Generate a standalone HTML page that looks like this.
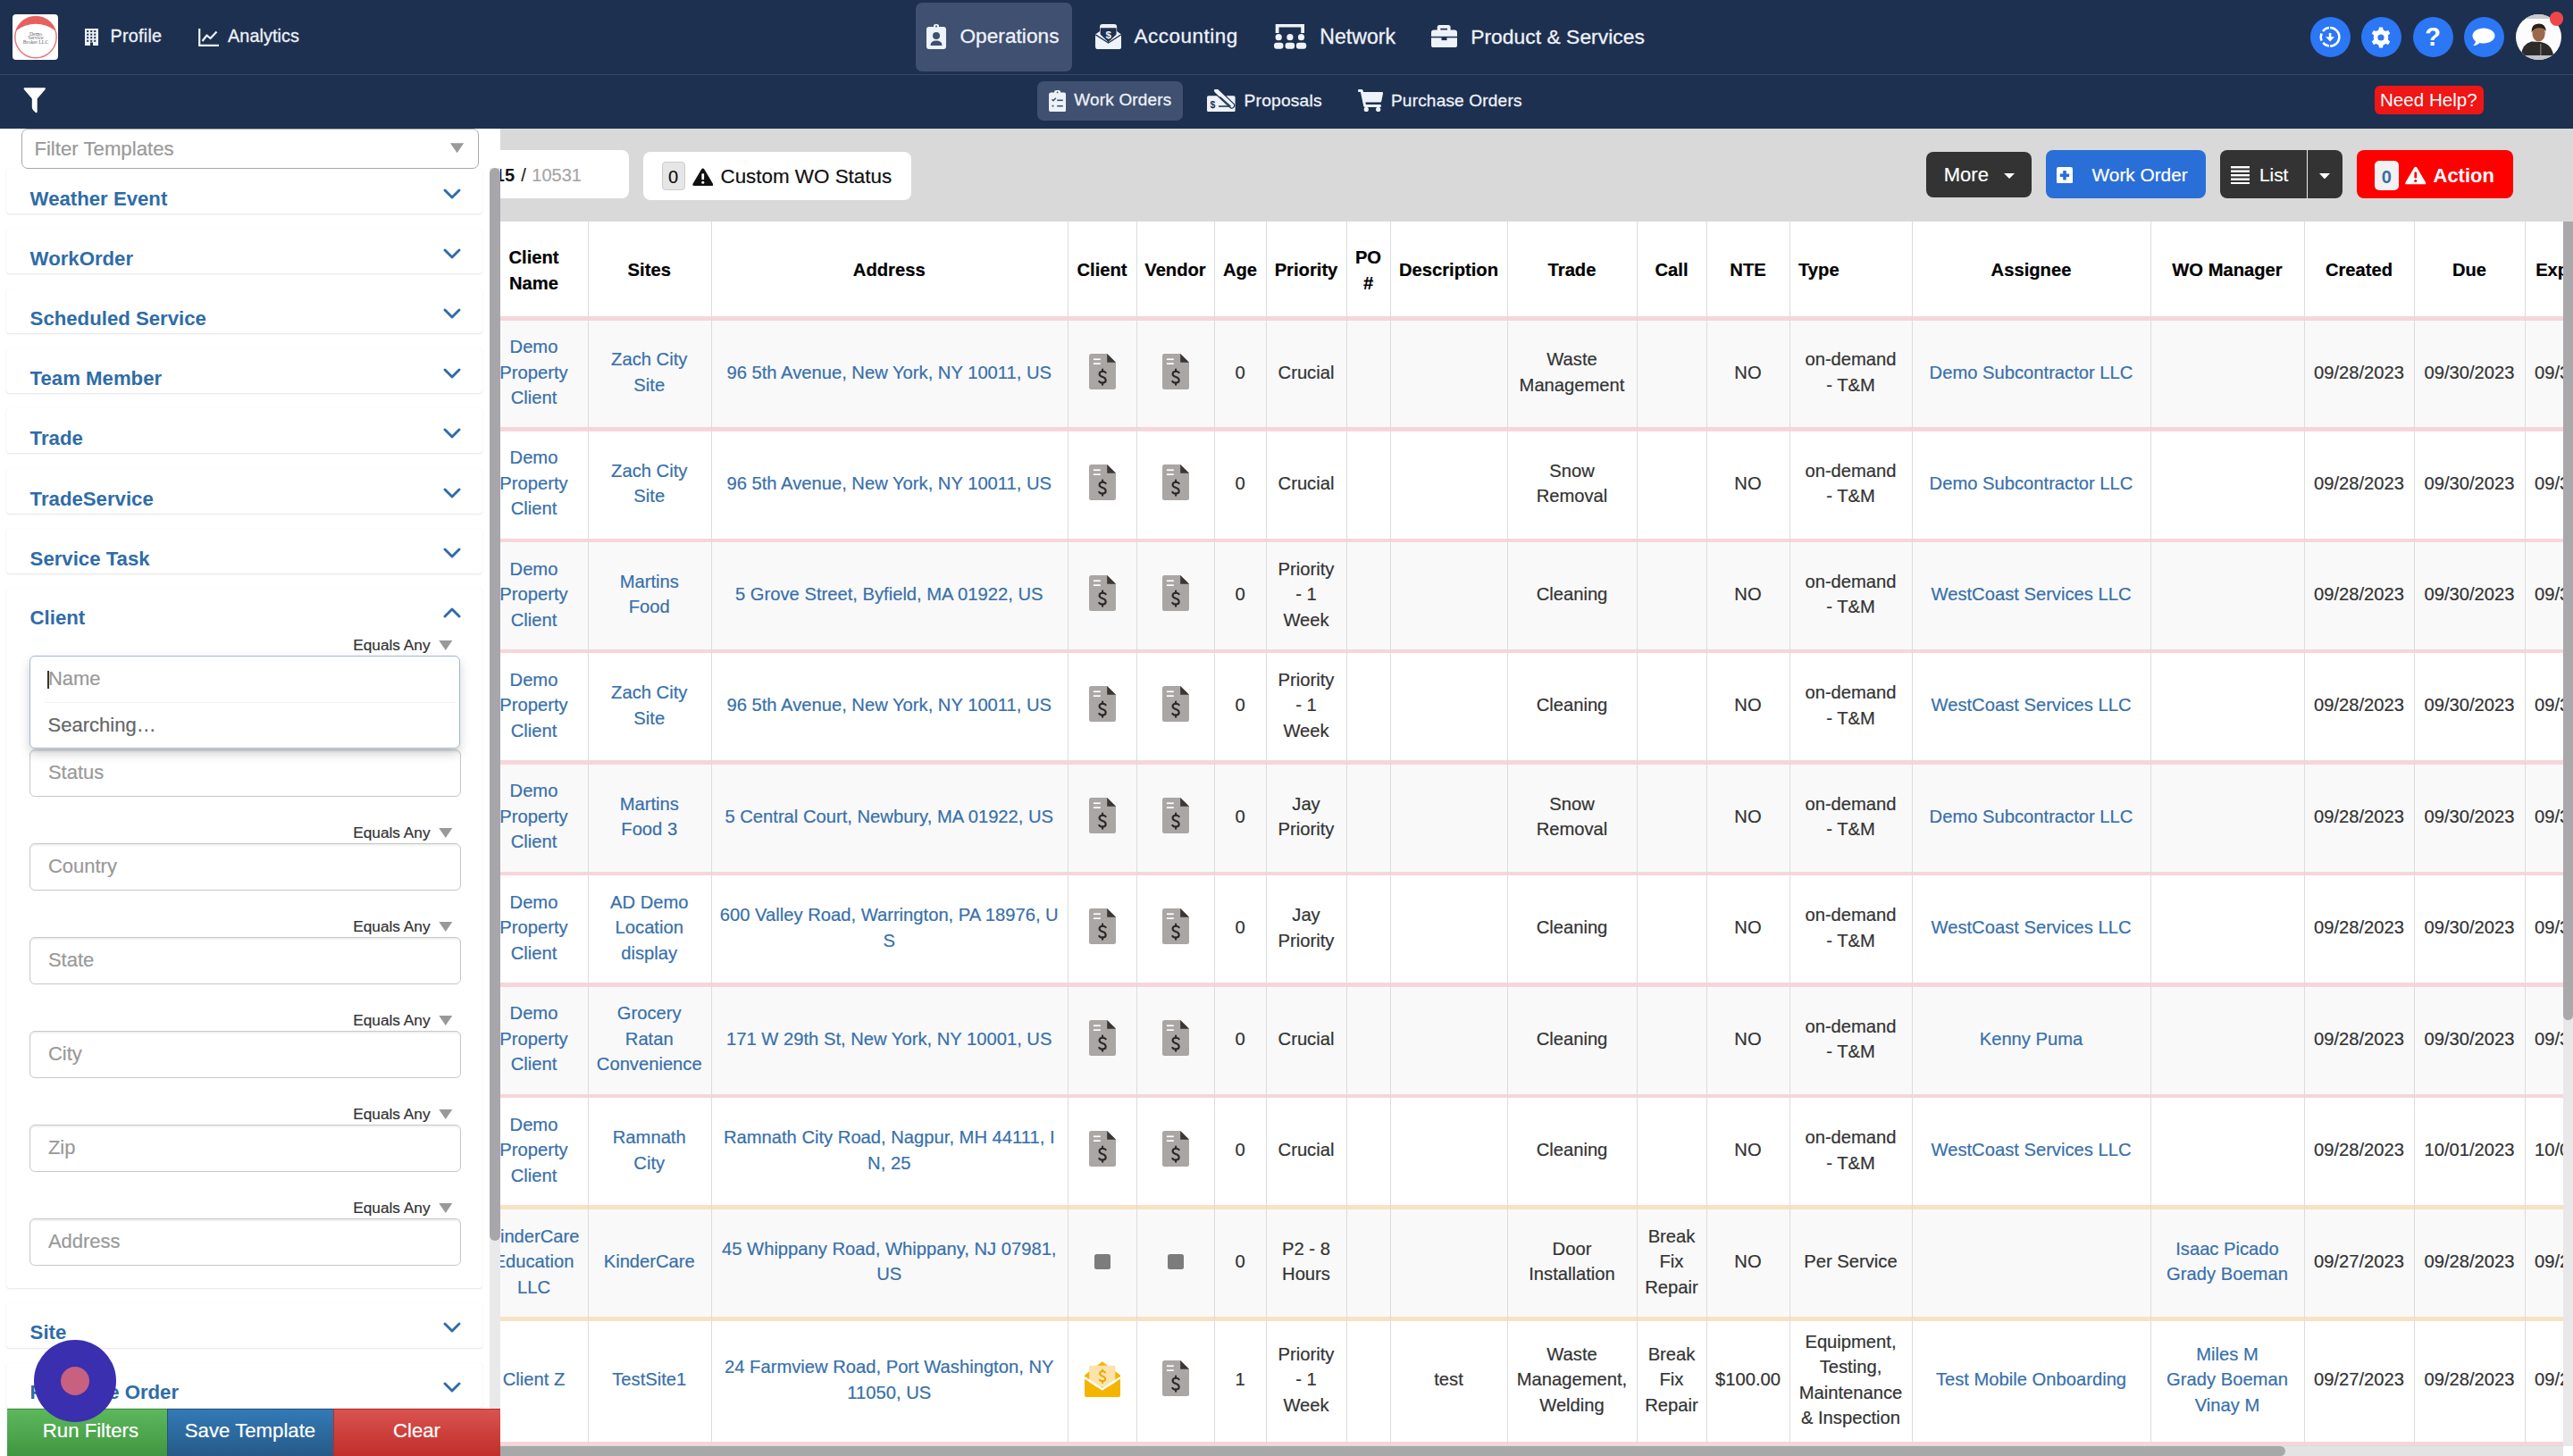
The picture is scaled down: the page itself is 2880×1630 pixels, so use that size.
<!DOCTYPE html><html><head><meta charset="utf-8"><style>
html,body{margin:0;padding:0;}
body{width:2880px;height:1630px;overflow:hidden;position:relative;background:#d9d9d9;font-family:"Liberation Sans", sans-serif;}
.t{position:absolute;white-space:nowrap;line-height:1;}
.b{position:absolute;}
.nav{z-index:5;}
.ns{-webkit-text-stroke:0.35px #eef2f9;}
.cell{position:absolute;display:flex;align-items:center;justify-content:center;text-align:center;font-size:20.2px;line-height:28.6px;color:#333;-webkit-text-stroke:0.2px currentColor;}
.lk{color:#3870aa;}
</style></head><body>
<div class="b" style="left:0.00px;top:0.00px;width:2880.00px;height:83.00px;background:#1e3050;z-index:5"></div>
<div class="b" style="left:0.00px;top:83.00px;width:2880.00px;height:1.00px;background:#364868;z-index:5"></div>
<div class="b" style="left:0.00px;top:84.00px;width:2880.00px;height:60.00px;background:#1e3050;z-index:5"></div>
<div class="b" style="left:14.00px;top:16.00px;width:51.00px;height:51.00px;background:#fff;border-radius:4px;z-index:6"></div>
<svg class="b" style="left:14.00px;top:16.00px;z-index:6;" width="51.00" height="51.00" viewBox="0 0 51 51"><circle cx="26" cy="25.6" r="23.2" fill="none" stroke="#e47676" stroke-width="1.4"/><path d="M3.95 18.4A23.2 23.2 0 0 1 48.05 18.4A35.8 35.8 0 0 0 3.95 18.4Z" fill="#e85f5f"/><text x="26" y="24" font-family="Liberation Serif" font-size="5.8" text-anchor="middle" fill="#666">Demo</text><text x="26" y="28.2" font-family="Liberation Serif" font-size="5.8" text-anchor="middle" fill="#666">Service</text><text x="26" y="32.6" font-family="Liberation Serif" font-size="5.8" text-anchor="middle" fill="#666">Broker LLC</text></svg>
<svg class="b" style="left:95.00px;top:32.00px;z-index:6;" width="15.00" height="19.00" viewBox="0 0 15 19"><path fill="#eef2f9" d="M0 0H15V19H9V15.5H6V19H0Z"/><rect x="2.2" y="2.0" width="2" height="2" fill="#1e3050"/><rect x="2.2" y="5.6" width="2" height="2" fill="#1e3050"/><rect x="2.2" y="9.2" width="2" height="2" fill="#1e3050"/><rect x="2.2" y="12.8" width="2" height="2" fill="#1e3050"/><rect x="6.2" y="2.0" width="2" height="2" fill="#1e3050"/><rect x="6.2" y="5.6" width="2" height="2" fill="#1e3050"/><rect x="6.2" y="9.2" width="2" height="2" fill="#1e3050"/><rect x="6.2" y="12.8" width="2" height="2" fill="#1e3050"/><rect x="10.2" y="2.0" width="2" height="2" fill="#1e3050"/><rect x="10.2" y="5.6" width="2" height="2" fill="#1e3050"/><rect x="10.2" y="9.2" width="2" height="2" fill="#1e3050"/><rect x="10.2" y="12.8" width="2" height="2" fill="#1e3050"/></svg>
<div class="t" style="left:123.50px;top:31.04px;font-size:19.8px;color:#eef2f9;font-weight:400;z-index:6;-webkit-text-stroke:0.3px #eef2f9;letter-spacing:0.25px">Profile</div>
<svg class="b" style="left:222.00px;top:31.50px;z-index:6;" width="23.00" height="20.00" viewBox="0 0 23 20"><path d="M1.2 0V18.8H23" fill="none" stroke="#eef2f9" stroke-width="2.2"/><path d="M4.5 14L9.5 7.5L13.5 11L20.5 3.5" fill="none" stroke="#eef2f9" stroke-width="2.2" stroke-linejoin="round"/></svg>
<div class="t" style="left:255.00px;top:31.44px;font-size:19.8px;color:#eef2f9;font-weight:400;z-index:6;-webkit-text-stroke:0.3px #eef2f9;letter-spacing:0.1px">Analytics</div>
<div class="b" style="left:1025.00px;top:3.00px;width:175.00px;height:77.00px;background:#3f5070;border-radius:7px;z-index:6"></div>
<svg class="b" style="left:1037.00px;top:27.00px;z-index:6;" width="22.00" height="28.00" viewBox="0 0 22 28"><rect x="0" y="3" width="22" height="25" rx="3" fill="#eef2f9"/><rect x="8" y="0" width="6" height="5" rx="2" fill="#eef2f9"/><circle cx="11" cy="2.5" r="1" fill="#3f5070"/><circle cx="11" cy="13" r="4" fill="#3f5070"/><path d="M4.5 24Q4.5 18.5 11 18.5Q17.5 18.5 17.5 24Z" fill="#3f5070"/></svg>
<div class="t" style="left:1074.50px;top:29.87px;font-size:22.6px;color:#eef2f9;font-weight:400;z-index:6;-webkit-text-stroke:0.3px #eef2f9;letter-spacing:0.05px">Operations</div>
<svg class="b" style="left:1225.60px;top:27.00px;z-index:6;" width="29.20" height="28.20" viewBox="0 0 29 28"><path d="M0 11.5L5 8V3Q5 0 8 0H21Q24 0 24 3V8L29 11.5V25Q29 28 26 28H3Q0 28 0 25Z" fill="#eef2f9"/><path d="M5.6 4.2H23.4V11.5L14.5 20.2L5.6 11.5Z" fill="#1e3050"/><path d="M0.3 11.8L14.5 20.8L28.7 11.8" fill="none" stroke="#1e3050" stroke-width="1.3"/><text x="14.5" y="16.3" font-family="Liberation Sans" font-weight="700" font-size="11.5" text-anchor="middle" fill="#eef2f9">$</text></svg>
<div class="t" style="left:1269.50px;top:29.94px;font-size:22.4px;color:#eef2f9;font-weight:400;z-index:6;-webkit-text-stroke:0.3px #eef2f9;letter-spacing:0.55px">Accounting</div>
<svg class="b" style="left:1426.00px;top:27.00px;z-index:6;" width="36.50" height="28.00" viewBox="0 0 36.5 28"><path d="M1.7 0H34V10H30.2V3.4H5.5V10H1.7Z" fill="#eef2f9"/><circle cx="5.2" cy="14.7" r="3.6" fill="#eef2f9"/><circle cx="17.9" cy="14.7" r="3.6" fill="#eef2f9"/><circle cx="30.5" cy="14.7" r="3.6" fill="#eef2f9"/><rect x="0" y="20.8" width="10.4" height="7" rx="3" fill="#eef2f9"/><rect x="12.6" y="20.8" width="10.5" height="7" rx="3" fill="#eef2f9"/><rect x="24.9" y="20.8" width="11.3" height="7" rx="3" fill="#eef2f9"/></svg>
<div class="t" style="left:1477.30px;top:29.93px;font-size:23.0px;color:#eef2f9;font-weight:400;z-index:6;-webkit-text-stroke:0.3px #eef2f9;letter-spacing:0.05px">Network</div>
<svg class="b" style="left:1602.00px;top:27.50px;z-index:6;" width="29.00" height="25.50" viewBox="0 0 29 25.5"><path d="M6.7 6V2.5Q6.7 0 9.2 0H19.1Q21.6 0 21.6 2.5V6H18V3.7H10.3V6Z" fill="#eef2f9"/><rect x="0" y="5.5" width="29" height="20" rx="3" fill="#eef2f9"/><rect x="0" y="12.8" width="29" height="1.5" fill="#1e3050"/><rect x="11.5" y="13.5" width="6" height="3.6" fill="#1e3050"/></svg>
<div class="t" style="left:1646.20px;top:29.70px;font-size:22.8px;color:#eef2f9;font-weight:400;z-index:6;-webkit-text-stroke:0.3px #eef2f9;letter-spacing:0.05px">Product &amp; Services</div>
<div class="b" style="left:2585.50px;top:18.90px;width:45.00px;height:45.00px;background:#2b77f5;border-radius:50%;z-index:6"></div>
<div class="b" style="left:2642.50px;top:18.90px;width:45.00px;height:45.00px;background:#2b77f5;border-radius:50%;z-index:6"></div>
<div class="b" style="left:2700.50px;top:18.90px;width:45.00px;height:45.00px;background:#2b77f5;border-radius:50%;z-index:6"></div>
<div class="b" style="left:2757.50px;top:18.90px;width:45.00px;height:45.00px;background:#2b77f5;border-radius:50%;z-index:6"></div>
<svg class="b" style="left:2585.00px;top:18.00px;z-index:6;" width="47.00" height="47.00" viewBox="0 0 47 47"><path d="M23.10 13.00A10.3 10.3 0 0 1 23.10 33.60M22.02 13.06A10.3 10.3 0 0 0 14.98 16.96M13.55 19.44A10.3 10.3 0 0 0 13.69 27.49M15.21 29.92A10.3 10.3 0 0 0 22.02 33.54" fill="none" stroke="#fff" stroke-width="2.5"/><path d="M23.1 19V25" fill="none" stroke="#fff" stroke-width="2.6"/><path d="M18.2 23.2H28L23.1 28.4Z" fill="#fff"/></svg>
<svg class="b" style="left:2653.00px;top:29.50px;z-index:6;" width="24.00" height="24.00" viewBox="0 0 24 24"><path fill="#fff" d="M10 0.5H14L14.6 3.5A9 9 0 0 1 17.3 5L20.2 4L22.2 7.4L19.9 9.4A9 9 0 0 1 19.9 14.6L22.2 16.6L20.2 20L17.3 19A9 9 0 0 1 14.6 20.5L14 23.5H10L9.4 20.5A9 9 0 0 1 6.7 19L3.8 20L1.8 16.6L4.1 14.6A9 9 0 0 1 4.1 9.4L1.8 7.4L3.8 4L6.7 5A9 9 0 0 1 9.4 3.5Z"/><circle cx="12" cy="12" r="3.6" fill="#2b77f5"/></svg>
<div class="t" style="left:2223.00px;width:1000px;text-align:center;top:26.95px;font-size:29px;color:#fff;font-weight:700;z-index:6">?</div>
<svg class="b" style="left:2767.00px;top:31.00px;z-index:6;" width="26.00" height="21.00" viewBox="0 0 26 21"><path fill="#fff" d="M13 0.5C20 0.5 25.5 4.3 25.5 9C25.5 13.7 20 17.5 13 17.5C11.5 17.5 10 17.3 8.6 16.9C6.8 18.6 4 20 1.2 20.2C2.8 18.5 3.8 16.8 4 15.2C2 13.6 0.5 11.5 0.5 9C0.5 4.3 6 0.5 13 0.5Z"/></svg>
<svg class="b" style="left:2816.00px;top:16.00px;z-index:6;" width="51.00" height="51.00" viewBox="0 0 51 51"><defs><clipPath id="av"><circle cx="25.5" cy="25.5" r="25.5"/></clipPath></defs><g clip-path="url(#av)"><rect width="51" height="51" fill="#fcfcfc"/><rect y="0" width="51" height="5" fill="#c9c9cf"/><rect y="46" width="51" height="5" fill="#c3c3c8"/><path d="M6 46Q7 33 17.5 30.5L27.8 31Q40 33 42.2 46Z" fill="#2d2b29"/><rect x="27.2" y="33" width="1.3" height="13" fill="#7a7a7a"/><ellipse cx="25.6" cy="21" rx="7.2" ry="9.6" fill="#9b6a4c"/><path d="M17.6 20.5Q17 10.5 25.6 10.5Q33.8 10.5 33.6 19.5Q32 14.8 26 15.2Q20 15.2 17.6 20.5Z" fill="#2a1f18"/></g></svg>
<div class="b" style="left:2854.00px;top:13.40px;width:15.20px;height:15.20px;background:#f0464b;border-radius:50%;z-index:7"></div>
<svg class="b" style="left:25.50px;top:98.00px;z-index:6;" width="25.50" height="29.00" viewBox="0 0 26 29"><path fill="#fff" d="M1.5 0H24.5Q26 0 25 2L16 12.5V27Q16 29 14.5 28.5Q10 25.5 10 22V12.5L1 2Q0 0 1.5 0Z"/></svg>
<div class="b" style="left:1161.00px;top:91.00px;width:163.00px;height:44.00px;background:#3f5070;border-radius:7px;z-index:6"></div>
<svg class="b" style="left:1174.00px;top:100.60px;z-index:6;" width="19.20" height="24.40" viewBox="0 0 19.2 24.4"><rect x="0" y="2.6" width="19.2" height="21.8" rx="2.6" fill="#eef2f9"/><rect x="6" y="0" width="7.2" height="5" rx="2.2" fill="#eef2f9"/><circle cx="9.6" cy="2.4" r="0.9" fill="#3f5070"/><path d="M3.5 10.3L5 11.8L7.8 8.8" fill="none" stroke="#3f5070" stroke-width="1.5"/><rect x="9.2" y="10.5" width="6.6" height="1.6" fill="#3f5070"/><rect x="3.6" y="16.7" width="1.8" height="1.8" fill="#3f5070"/><rect x="9.2" y="16.9" width="6.6" height="1.6" fill="#3f5070"/></svg>
<div class="t" style="left:1202.30px;top:103.20px;font-size:18.9px;color:#eef2f9;font-weight:400;z-index:6;-webkit-text-stroke:0.3px #eef2f9;letter-spacing:0.22px">Work Orders</div>
<svg class="b" style="left:1351.00px;top:100.00px;z-index:6;" width="32.00" height="25.20" viewBox="0 0 32 25.2"><rect x="0" y="7.3" width="31.6" height="17.8" rx="1.6" fill="#eef2f9"/><path d="M10.4 1.6L27.6 18" stroke="#1e3050" stroke-width="7.2" stroke-linecap="round"/><path d="M10.4 1.6L27.6 18" stroke="#eef2f9" stroke-width="4.8" stroke-linecap="round"/><path d="M14.5 8.6L26.6 19.2" stroke="#1e3050" stroke-width="1.3"/><text x="6.3" y="21" font-family="Liberation Sans" font-weight="700" font-size="10.5" text-anchor="middle" fill="#1e3050">$</text><rect x="13" y="18.3" width="12" height="1.5" fill="#1e3050"/></svg>
<div class="t" style="left:1392.60px;top:102.95px;font-size:19.2px;color:#eef2f9;font-weight:400;z-index:6;-webkit-text-stroke:0.3px #eef2f9;letter-spacing:0.2px">Proposals</div>
<svg class="b" style="left:1520.00px;top:100.30px;z-index:6;" width="28.20" height="25.00" viewBox="0 0 28 25"><path fill="#eef2f9" d="M0 0.8Q0 0 0.8 0H4Q5.2 0 5.5 1.2L6 3H27Q28.2 3 28 4.2L26.2 13.2Q26 14.5 24.8 14.5H8.3L8.8 17H24.5Q25.8 17 25.8 18.2V18.8Q25.8 20 24.5 20H7.6Q6.5 20 6.2 19L2.8 3H0.8Q0 3 0 2.2Z"/><circle cx="9.2" cy="22.4" r="2.6" fill="#eef2f9"/><circle cx="22.6" cy="22.4" r="2.6" fill="#eef2f9"/></svg>
<div class="t" style="left:1557.00px;top:103.12px;font-size:19.0px;color:#eef2f9;font-weight:400;z-index:6;-webkit-text-stroke:0.3px #eef2f9;letter-spacing:0.2px">Purchase Orders</div>
<div class="b" style="left:2658.00px;top:96.00px;width:122.00px;height:32.00px;background:#ef1616;border-radius:6px;z-index:6"></div>
<div class="t" style="left:2664.00px;top:102.06px;font-size:20.6px;color:#fff;font-weight:400;z-index:6;-webkit-text-stroke:0">Need Help?</div>
<div class="b" style="left:560.00px;top:144.00px;width:2320.00px;height:104.00px;background:#d9d9d9"></div>
<div class="b" style="left:540.00px;top:168.00px;width:163.60px;height:54.00px;background:#fff;border-radius:8px"></div>
<div class="t" style="left:553.80px;top:186.07px;font-size:20px;color:#111;font-weight:700;">15</div>
<div class="t" style="left:583.20px;top:186.07px;font-size:20px;color:#222;font-weight:400;;-webkit-text-stroke:0.2px currentColor">/</div>
<div class="t" style="left:595.30px;top:186.27px;font-size:20px;color:#a6a6a6;font-weight:400;;-webkit-text-stroke:0.2px currentColor">10531</div>
<div class="b" style="left:720.00px;top:170.00px;width:300.00px;height:53.70px;background:#fff;border-radius:8px"></div>
<div class="b" style="left:740.50px;top:181.30px;width:26.00px;height:32.10px;background:#e6e6e6;border:1px solid #ccc;border-radius:4px;box-sizing:border-box"></div>
<div class="t" style="left:253.50px;width:1000px;text-align:center;top:187.57px;font-size:20px;color:#111;font-weight:400;;-webkit-text-stroke:0.2px currentColor">0</div>
<svg class="b" style="left:774.50px;top:188.00px;" width="23.50" height="20.50" viewBox="0 0 24 21"><path d="M12 0.5Q13 0.5 13.8 1.8L23.5 18.3Q24.3 20.5 22 20.5H2Q-0.3 20.5 0.5 18.3L10.2 1.8Q11 0.5 12 0.5Z" fill="#111"/><rect x="10.6" y="6.5" width="2.8" height="7" rx="1" fill="#fff"/><circle cx="12" cy="16.6" r="1.6" fill="#fff"/></svg>
<div class="t" style="left:806.50px;top:187.34px;font-size:22.4px;color:#111;font-weight:400;;-webkit-text-stroke:0.2px currentColor">Custom WO Status</div>
<div class="b" style="left:2156.00px;top:170.30px;width:118.00px;height:50.70px;background:#333;border-radius:8px"></div>
<div class="t" style="left:2175.80px;top:184.88px;font-size:22px;color:#fff;font-weight:400;;-webkit-text-stroke:0.2px currentColor">More</div>
<svg class="b" style="left:2243.00px;top:193.90px;" width="12.20" height="6.00" viewBox="0 0 12 6"><path d="M0 0H12L6 6Z" fill="#fff"/></svg>
<div class="b" style="left:2290.00px;top:168.20px;width:179.00px;height:53.60px;background:#2a6ed8;border-radius:8px"></div>
<svg class="b" style="left:2302.00px;top:186.80px;" width="18.00" height="18.50" viewBox="0 0 18 18.5"><rect width="18" height="18.5" rx="2.2" fill="#fff"/><path d="M9 4V14.5M3.8 9.25H14.2" stroke="#2a6ed8" stroke-width="3.6"/></svg>
<div class="t" style="left:2341.60px;top:186.39px;font-size:20.8px;color:#fff;font-weight:400;;-webkit-text-stroke:0.2px currentColor">Work Order</div>
<div class="b" style="left:2485.00px;top:168.00px;width:136.50px;height:54.00px;background:#333;border-radius:8px"></div>
<div class="b" style="left:2582.00px;top:168.00px;width:1.00px;height:54.00px;background:#eee"></div>
<svg class="b" style="left:2497.00px;top:186.00px;" width="21.00" height="20.00" viewBox="0 0 21 20"><rect y="0.0" width="21" height="2.4" fill="#fff"/><rect y="4.5" width="21" height="2.4" fill="#fff"/><rect y="9.0" width="21" height="2.4" fill="#fff"/><rect y="13.5" width="21" height="2.4" fill="#fff"/><rect y="18.0" width="21" height="2.4" fill="#fff"/></svg>
<div class="t" style="left:2529.00px;top:186.39px;font-size:20.8px;color:#fff;font-weight:400;;-webkit-text-stroke:0.2px currentColor">List</div>
<svg class="b" style="left:2596.20px;top:193.80px;" width="12.00" height="6.40" viewBox="0 0 12 6.4"><path d="M0 0H12L6 6.4Z" fill="#fff"/></svg>
<div class="b" style="left:2638.00px;top:168.00px;width:175.00px;height:54.00px;background:#fe0000;border-radius:8px"></div>
<div class="b" style="left:2657.80px;top:180.00px;width:27.20px;height:33.00px;background:#f2f2f2;border-radius:5px"></div>
<div class="t" style="left:2171.40px;width:1000px;text-align:center;top:187.57px;font-size:20px;color:#3a6ea5;font-weight:700;">0</div>
<svg class="b" style="left:2692.20px;top:185.60px;" width="23.60" height="21.00" viewBox="0 0 24 21"><path d="M12 0.5Q13 0.5 13.8 1.8L23.5 18.3Q24.3 20.5 22 20.5H2Q-0.3 20.5 0.5 18.3L10.2 1.8Q11 0.5 12 0.5Z" fill="#fff"/><rect x="10.6" y="6.5" width="2.8" height="7" rx="1" fill="#fe0000"/><circle cx="12" cy="16.6" r="1.6" fill="#fe0000"/></svg>
<div class="t" style="left:2723.50px;top:185.88px;font-size:22px;color:#fff;font-weight:700;">Action</div>
<div class="b" style="left:560.00px;top:248.00px;width:2309.00px;height:106.00px;background:#fff"></div>
<div class="b" style="left:560.00px;top:358.00px;width:2309.00px;height:120.00px;background:#f9f9f9"></div>
<div class="b" style="left:560.00px;top:482.00px;width:2309.00px;height:120.50px;background:#fff"></div>
<div class="b" style="left:560.00px;top:606.50px;width:2309.00px;height:120.00px;background:#f9f9f9"></div>
<div class="b" style="left:560.00px;top:730.50px;width:2309.00px;height:120.50px;background:#fff"></div>
<div class="b" style="left:560.00px;top:855.00px;width:2309.00px;height:120.50px;background:#f9f9f9"></div>
<div class="b" style="left:560.00px;top:979.50px;width:2309.00px;height:120.50px;background:#fff"></div>
<div class="b" style="left:560.00px;top:1104.00px;width:2309.00px;height:120.50px;background:#f9f9f9"></div>
<div class="b" style="left:560.00px;top:1228.50px;width:2309.00px;height:120.50px;background:#fff"></div>
<div class="b" style="left:560.00px;top:1353.00px;width:2309.00px;height:121.00px;background:#f9f9f9"></div>
<div class="b" style="left:560.00px;top:1478.00px;width:2309.00px;height:135.50px;background:#fff"></div>
<div class="b" style="left:560.00px;top:354.00px;width:2309.00px;height:4.50px;background:#f6d6db"></div>
<div class="b" style="left:560.00px;top:478.00px;width:2309.00px;height:4.50px;background:#f6d6db"></div>
<div class="b" style="left:560.00px;top:602.50px;width:2309.00px;height:4.50px;background:#f6d6db"></div>
<div class="b" style="left:560.00px;top:726.50px;width:2309.00px;height:4.50px;background:#f6d6db"></div>
<div class="b" style="left:560.00px;top:851.00px;width:2309.00px;height:4.50px;background:#f6d6db"></div>
<div class="b" style="left:560.00px;top:975.50px;width:2309.00px;height:4.50px;background:#f6d6db"></div>
<div class="b" style="left:560.00px;top:1100.00px;width:2309.00px;height:4.50px;background:#f6d6db"></div>
<div class="b" style="left:560.00px;top:1224.50px;width:2309.00px;height:4.50px;background:#f6d6db"></div>
<div class="b" style="left:560.00px;top:1349.00px;width:2309.00px;height:4.50px;background:#f8e2c4"></div>
<div class="b" style="left:560.00px;top:1474.00px;width:2309.00px;height:4.50px;background:#f8e2c4"></div>
<div class="b" style="left:560.00px;top:1613.50px;width:2309.00px;height:4.50px;background:#f6d6db"></div>
<div class="b" style="left:658.00px;top:248.00px;width:1.00px;height:1371.00px;background:#dcdcdc"></div>
<div class="b" style="left:795.50px;top:248.00px;width:1.00px;height:1371.00px;background:#dcdcdc"></div>
<div class="b" style="left:1195.00px;top:248.00px;width:1.00px;height:1371.00px;background:#dcdcdc"></div>
<div class="b" style="left:1272.00px;top:248.00px;width:1.00px;height:1371.00px;background:#dcdcdc"></div>
<div class="b" style="left:1359.00px;top:248.00px;width:1.00px;height:1371.00px;background:#dcdcdc"></div>
<div class="b" style="left:1417.00px;top:248.00px;width:1.00px;height:1371.00px;background:#dcdcdc"></div>
<div class="b" style="left:1507.00px;top:248.00px;width:1.00px;height:1371.00px;background:#dcdcdc"></div>
<div class="b" style="left:1556.00px;top:248.00px;width:1.00px;height:1371.00px;background:#dcdcdc"></div>
<div class="b" style="left:1687.00px;top:248.00px;width:1.00px;height:1371.00px;background:#dcdcdc"></div>
<div class="b" style="left:1832.00px;top:248.00px;width:1.00px;height:1371.00px;background:#dcdcdc"></div>
<div class="b" style="left:1910.00px;top:248.00px;width:1.00px;height:1371.00px;background:#dcdcdc"></div>
<div class="b" style="left:2003.00px;top:248.00px;width:1.00px;height:1371.00px;background:#dcdcdc"></div>
<div class="b" style="left:2140.00px;top:248.00px;width:1.00px;height:1371.00px;background:#dcdcdc"></div>
<div class="b" style="left:2407.00px;top:248.00px;width:1.00px;height:1371.00px;background:#dcdcdc"></div>
<div class="b" style="left:2579.00px;top:248.00px;width:1.00px;height:1371.00px;background:#dcdcdc"></div>
<div class="b" style="left:2702.00px;top:248.00px;width:1.00px;height:1371.00px;background:#dcdcdc"></div>
<div class="b" style="left:2826.00px;top:248.00px;width:1.00px;height:1371.00px;background:#dcdcdc"></div>
<div class="b" style="left:560px;top:248px;width:2309px;height:1382px;overflow:hidden">
<div class="b" style="left:-560px;top:-248px;width:2880px;height:1630px">
<div class="cell " style="left:537.00px;top:249.50px;width:121.00px;height:106.00px;font-weight:700;color:#000">Client<br>Name</div>
<div class="cell " style="left:658.00px;top:249.50px;width:137.50px;height:106.00px;font-weight:700;color:#000">Sites</div>
<div class="cell " style="left:795.50px;top:249.50px;width:399.50px;height:106.00px;font-weight:700;color:#000">Address</div>
<div class="cell " style="left:1195.00px;top:249.50px;width:77.00px;height:106.00px;font-weight:700;color:#000">Client</div>
<div class="cell " style="left:1272.00px;top:249.50px;width:87.00px;height:106.00px;font-weight:700;color:#000">Vendor</div>
<div class="cell " style="left:1359.00px;top:249.50px;width:58.00px;height:106.00px;font-weight:700;color:#000">Age</div>
<div class="cell " style="left:1417.00px;top:249.50px;width:90.00px;height:106.00px;font-weight:700;color:#000">Priority</div>
<div class="cell " style="left:1507.00px;top:249.50px;width:49.00px;height:106.00px;font-weight:700;color:#000">PO<br>#</div>
<div class="cell " style="left:1556.00px;top:249.50px;width:131.00px;height:106.00px;font-weight:700;color:#000">Description</div>
<div class="cell " style="left:1687.00px;top:249.50px;width:145.00px;height:106.00px;font-weight:700;color:#000">Trade</div>
<div class="cell " style="left:1832.00px;top:249.50px;width:78.00px;height:106.00px;font-weight:700;color:#000">Call</div>
<div class="cell " style="left:1910.00px;top:249.50px;width:93.00px;height:106.00px;font-weight:700;color:#000">NTE</div>
<div class="cell " style="left:2003.00px;top:249.50px;width:137.00px;height:106.00px;font-weight:700;color:#000;justify-content:flex-start;padding-left:10px;box-sizing:border-box">Type</div>
<div class="cell " style="left:2140.00px;top:249.50px;width:267.00px;height:106.00px;font-weight:700;color:#000">Assignee</div>
<div class="cell " style="left:2407.00px;top:249.50px;width:172.00px;height:106.00px;font-weight:700;color:#000">WO Manager</div>
<div class="cell " style="left:2579.00px;top:249.50px;width:123.00px;height:106.00px;font-weight:700;color:#000">Created</div>
<div class="cell " style="left:2702.00px;top:249.50px;width:124.00px;height:106.00px;font-weight:700;color:#000">Due</div>
<div class="cell " style="left:2826.00px;top:249.50px;width:123.00px;height:106.00px;font-weight:700;color:#000">Expiration</div>
<div class="cell " style="left:537.00px;top:357.20px;width:121.00px;height:119.50px;"><span class="lk">Demo<br>Property<br>Client</span></div>
<div class="cell " style="left:658.00px;top:357.20px;width:137.50px;height:119.50px;"><span class="lk">Zach City<br>Site</span></div>
<div class="cell " style="left:795.50px;top:357.20px;width:399.50px;height:119.50px;"><span class="lk">96 5th Avenue, New York, NY 10011, US</span></div>
<div class="cell " style="left:1195.00px;top:357.20px;width:77.00px;height:119.50px;"><svg width="30" height="40" viewBox="0 0 30 40" style="margin-top:-2.4px;margin-left:1px"><path d="M2.5 0H20.2L30 9.8V37.5Q30 40 27.5 40H2.5Q0 40 0 37.5V2.5Q0 0 2.5 0Z" fill="#aaa6a4"/><path d="M20.2 0L30 9.8H20.2Z" fill="#3a3635"/><rect x="4.9" y="5.4" width="7.9" height="1.7" fill="#fff"/><rect x="4.9" y="10.3" width="7.9" height="1.7" fill="#fff"/><path d="M18.7 21.2Q17.8 19.7 15.1 19.7Q11.6 19.7 11.6 22.7Q11.6 25 15.1 26Q18.7 27 18.7 29.8Q18.7 32.6 15.1 32.6Q12.3 32.6 11.3 30.9" fill="none" stroke="#2b2827" stroke-width="2.1" stroke-linecap="round"/><path d="M15.1 17.6V19.8M15.1 32.5V34.8" fill="none" stroke="#2b2827" stroke-width="2.1" stroke-linecap="round"/></svg></div>
<div class="cell " style="left:1272.00px;top:357.20px;width:87.00px;height:119.50px;"><svg width="30" height="40" viewBox="0 0 30 40" style="margin-top:-2.4px;margin-left:1px"><path d="M2.5 0H20.2L30 9.8V37.5Q30 40 27.5 40H2.5Q0 40 0 37.5V2.5Q0 0 2.5 0Z" fill="#aaa6a4"/><path d="M20.2 0L30 9.8H20.2Z" fill="#3a3635"/><rect x="4.9" y="5.4" width="7.9" height="1.7" fill="#fff"/><rect x="4.9" y="10.3" width="7.9" height="1.7" fill="#fff"/><path d="M18.7 21.2Q17.8 19.7 15.1 19.7Q11.6 19.7 11.6 22.7Q11.6 25 15.1 26Q18.7 27 18.7 29.8Q18.7 32.6 15.1 32.6Q12.3 32.6 11.3 30.9" fill="none" stroke="#2b2827" stroke-width="2.1" stroke-linecap="round"/><path d="M15.1 17.6V19.8M15.1 32.5V34.8" fill="none" stroke="#2b2827" stroke-width="2.1" stroke-linecap="round"/></svg></div>
<div class="cell " style="left:1359.00px;top:357.20px;width:58.00px;height:119.50px;">0</div>
<div class="cell " style="left:1417.00px;top:357.20px;width:90.00px;height:119.50px;">Crucial</div>
<div class="cell " style="left:1687.00px;top:357.20px;width:145.00px;height:119.50px;">Waste<br>Management</div>
<div class="cell " style="left:1910.00px;top:357.20px;width:93.00px;height:119.50px;">NO</div>
<div class="cell " style="left:2003.00px;top:357.20px;width:137.00px;height:119.50px;">on-demand<br>- T&amp;M</div>
<div class="cell " style="left:2140.00px;top:357.20px;width:267.00px;height:119.50px;"><span class="lk">Demo Subcontractor LLC</span></div>
<div class="cell " style="left:2579.00px;top:357.20px;width:123.00px;height:119.50px;">09/28/2023</div>
<div class="cell " style="left:2702.00px;top:357.20px;width:124.00px;height:119.50px;">09/30/2023</div>
<div class="cell " style="left:2826.00px;top:357.20px;width:123.00px;height:119.50px;">09/30/2023</div>
<div class="cell " style="left:537.00px;top:481.20px;width:121.00px;height:120.00px;"><span class="lk">Demo<br>Property<br>Client</span></div>
<div class="cell " style="left:658.00px;top:481.20px;width:137.50px;height:120.00px;"><span class="lk">Zach City<br>Site</span></div>
<div class="cell " style="left:795.50px;top:481.20px;width:399.50px;height:120.00px;"><span class="lk">96 5th Avenue, New York, NY 10011, US</span></div>
<div class="cell " style="left:1195.00px;top:481.20px;width:77.00px;height:120.00px;"><svg width="30" height="40" viewBox="0 0 30 40" style="margin-top:-2.4px;margin-left:1px"><path d="M2.5 0H20.2L30 9.8V37.5Q30 40 27.5 40H2.5Q0 40 0 37.5V2.5Q0 0 2.5 0Z" fill="#aaa6a4"/><path d="M20.2 0L30 9.8H20.2Z" fill="#3a3635"/><rect x="4.9" y="5.4" width="7.9" height="1.7" fill="#fff"/><rect x="4.9" y="10.3" width="7.9" height="1.7" fill="#fff"/><path d="M18.7 21.2Q17.8 19.7 15.1 19.7Q11.6 19.7 11.6 22.7Q11.6 25 15.1 26Q18.7 27 18.7 29.8Q18.7 32.6 15.1 32.6Q12.3 32.6 11.3 30.9" fill="none" stroke="#2b2827" stroke-width="2.1" stroke-linecap="round"/><path d="M15.1 17.6V19.8M15.1 32.5V34.8" fill="none" stroke="#2b2827" stroke-width="2.1" stroke-linecap="round"/></svg></div>
<div class="cell " style="left:1272.00px;top:481.20px;width:87.00px;height:120.00px;"><svg width="30" height="40" viewBox="0 0 30 40" style="margin-top:-2.4px;margin-left:1px"><path d="M2.5 0H20.2L30 9.8V37.5Q30 40 27.5 40H2.5Q0 40 0 37.5V2.5Q0 0 2.5 0Z" fill="#aaa6a4"/><path d="M20.2 0L30 9.8H20.2Z" fill="#3a3635"/><rect x="4.9" y="5.4" width="7.9" height="1.7" fill="#fff"/><rect x="4.9" y="10.3" width="7.9" height="1.7" fill="#fff"/><path d="M18.7 21.2Q17.8 19.7 15.1 19.7Q11.6 19.7 11.6 22.7Q11.6 25 15.1 26Q18.7 27 18.7 29.8Q18.7 32.6 15.1 32.6Q12.3 32.6 11.3 30.9" fill="none" stroke="#2b2827" stroke-width="2.1" stroke-linecap="round"/><path d="M15.1 17.6V19.8M15.1 32.5V34.8" fill="none" stroke="#2b2827" stroke-width="2.1" stroke-linecap="round"/></svg></div>
<div class="cell " style="left:1359.00px;top:481.20px;width:58.00px;height:120.00px;">0</div>
<div class="cell " style="left:1417.00px;top:481.20px;width:90.00px;height:120.00px;">Crucial</div>
<div class="cell " style="left:1687.00px;top:481.20px;width:145.00px;height:120.00px;">Snow<br>Removal</div>
<div class="cell " style="left:1910.00px;top:481.20px;width:93.00px;height:120.00px;">NO</div>
<div class="cell " style="left:2003.00px;top:481.20px;width:137.00px;height:120.00px;">on-demand<br>- T&amp;M</div>
<div class="cell " style="left:2140.00px;top:481.20px;width:267.00px;height:120.00px;"><span class="lk">Demo Subcontractor LLC</span></div>
<div class="cell " style="left:2579.00px;top:481.20px;width:123.00px;height:120.00px;">09/28/2023</div>
<div class="cell " style="left:2702.00px;top:481.20px;width:124.00px;height:120.00px;">09/30/2023</div>
<div class="cell " style="left:2826.00px;top:481.20px;width:123.00px;height:120.00px;">09/30/2023</div>
<div class="cell " style="left:537.00px;top:605.70px;width:121.00px;height:119.50px;"><span class="lk">Demo<br>Property<br>Client</span></div>
<div class="cell " style="left:658.00px;top:605.70px;width:137.50px;height:119.50px;"><span class="lk">Martins<br>Food</span></div>
<div class="cell " style="left:795.50px;top:605.70px;width:399.50px;height:119.50px;"><span class="lk">5 Grove Street, Byfield, MA 01922, US</span></div>
<div class="cell " style="left:1195.00px;top:605.70px;width:77.00px;height:119.50px;"><svg width="30" height="40" viewBox="0 0 30 40" style="margin-top:-2.4px;margin-left:1px"><path d="M2.5 0H20.2L30 9.8V37.5Q30 40 27.5 40H2.5Q0 40 0 37.5V2.5Q0 0 2.5 0Z" fill="#aaa6a4"/><path d="M20.2 0L30 9.8H20.2Z" fill="#3a3635"/><rect x="4.9" y="5.4" width="7.9" height="1.7" fill="#fff"/><rect x="4.9" y="10.3" width="7.9" height="1.7" fill="#fff"/><path d="M18.7 21.2Q17.8 19.7 15.1 19.7Q11.6 19.7 11.6 22.7Q11.6 25 15.1 26Q18.7 27 18.7 29.8Q18.7 32.6 15.1 32.6Q12.3 32.6 11.3 30.9" fill="none" stroke="#2b2827" stroke-width="2.1" stroke-linecap="round"/><path d="M15.1 17.6V19.8M15.1 32.5V34.8" fill="none" stroke="#2b2827" stroke-width="2.1" stroke-linecap="round"/></svg></div>
<div class="cell " style="left:1272.00px;top:605.70px;width:87.00px;height:119.50px;"><svg width="30" height="40" viewBox="0 0 30 40" style="margin-top:-2.4px;margin-left:1px"><path d="M2.5 0H20.2L30 9.8V37.5Q30 40 27.5 40H2.5Q0 40 0 37.5V2.5Q0 0 2.5 0Z" fill="#aaa6a4"/><path d="M20.2 0L30 9.8H20.2Z" fill="#3a3635"/><rect x="4.9" y="5.4" width="7.9" height="1.7" fill="#fff"/><rect x="4.9" y="10.3" width="7.9" height="1.7" fill="#fff"/><path d="M18.7 21.2Q17.8 19.7 15.1 19.7Q11.6 19.7 11.6 22.7Q11.6 25 15.1 26Q18.7 27 18.7 29.8Q18.7 32.6 15.1 32.6Q12.3 32.6 11.3 30.9" fill="none" stroke="#2b2827" stroke-width="2.1" stroke-linecap="round"/><path d="M15.1 17.6V19.8M15.1 32.5V34.8" fill="none" stroke="#2b2827" stroke-width="2.1" stroke-linecap="round"/></svg></div>
<div class="cell " style="left:1359.00px;top:605.70px;width:58.00px;height:119.50px;">0</div>
<div class="cell " style="left:1417.00px;top:605.70px;width:90.00px;height:119.50px;">Priority<br>- 1<br>Week</div>
<div class="cell " style="left:1687.00px;top:605.70px;width:145.00px;height:119.50px;">Cleaning</div>
<div class="cell " style="left:1910.00px;top:605.70px;width:93.00px;height:119.50px;">NO</div>
<div class="cell " style="left:2003.00px;top:605.70px;width:137.00px;height:119.50px;">on-demand<br>- T&amp;M</div>
<div class="cell " style="left:2140.00px;top:605.70px;width:267.00px;height:119.50px;"><span class="lk">WestCoast Services LLC</span></div>
<div class="cell " style="left:2579.00px;top:605.70px;width:123.00px;height:119.50px;">09/28/2023</div>
<div class="cell " style="left:2702.00px;top:605.70px;width:124.00px;height:119.50px;">09/30/2023</div>
<div class="cell " style="left:2826.00px;top:605.70px;width:123.00px;height:119.50px;">09/30/2023</div>
<div class="cell " style="left:537.00px;top:729.70px;width:121.00px;height:120.00px;"><span class="lk">Demo<br>Property<br>Client</span></div>
<div class="cell " style="left:658.00px;top:729.70px;width:137.50px;height:120.00px;"><span class="lk">Zach City<br>Site</span></div>
<div class="cell " style="left:795.50px;top:729.70px;width:399.50px;height:120.00px;"><span class="lk">96 5th Avenue, New York, NY 10011, US</span></div>
<div class="cell " style="left:1195.00px;top:729.70px;width:77.00px;height:120.00px;"><svg width="30" height="40" viewBox="0 0 30 40" style="margin-top:-2.4px;margin-left:1px"><path d="M2.5 0H20.2L30 9.8V37.5Q30 40 27.5 40H2.5Q0 40 0 37.5V2.5Q0 0 2.5 0Z" fill="#aaa6a4"/><path d="M20.2 0L30 9.8H20.2Z" fill="#3a3635"/><rect x="4.9" y="5.4" width="7.9" height="1.7" fill="#fff"/><rect x="4.9" y="10.3" width="7.9" height="1.7" fill="#fff"/><path d="M18.7 21.2Q17.8 19.7 15.1 19.7Q11.6 19.7 11.6 22.7Q11.6 25 15.1 26Q18.7 27 18.7 29.8Q18.7 32.6 15.1 32.6Q12.3 32.6 11.3 30.9" fill="none" stroke="#2b2827" stroke-width="2.1" stroke-linecap="round"/><path d="M15.1 17.6V19.8M15.1 32.5V34.8" fill="none" stroke="#2b2827" stroke-width="2.1" stroke-linecap="round"/></svg></div>
<div class="cell " style="left:1272.00px;top:729.70px;width:87.00px;height:120.00px;"><svg width="30" height="40" viewBox="0 0 30 40" style="margin-top:-2.4px;margin-left:1px"><path d="M2.5 0H20.2L30 9.8V37.5Q30 40 27.5 40H2.5Q0 40 0 37.5V2.5Q0 0 2.5 0Z" fill="#aaa6a4"/><path d="M20.2 0L30 9.8H20.2Z" fill="#3a3635"/><rect x="4.9" y="5.4" width="7.9" height="1.7" fill="#fff"/><rect x="4.9" y="10.3" width="7.9" height="1.7" fill="#fff"/><path d="M18.7 21.2Q17.8 19.7 15.1 19.7Q11.6 19.7 11.6 22.7Q11.6 25 15.1 26Q18.7 27 18.7 29.8Q18.7 32.6 15.1 32.6Q12.3 32.6 11.3 30.9" fill="none" stroke="#2b2827" stroke-width="2.1" stroke-linecap="round"/><path d="M15.1 17.6V19.8M15.1 32.5V34.8" fill="none" stroke="#2b2827" stroke-width="2.1" stroke-linecap="round"/></svg></div>
<div class="cell " style="left:1359.00px;top:729.70px;width:58.00px;height:120.00px;">0</div>
<div class="cell " style="left:1417.00px;top:729.70px;width:90.00px;height:120.00px;">Priority<br>- 1<br>Week</div>
<div class="cell " style="left:1687.00px;top:729.70px;width:145.00px;height:120.00px;">Cleaning</div>
<div class="cell " style="left:1910.00px;top:729.70px;width:93.00px;height:120.00px;">NO</div>
<div class="cell " style="left:2003.00px;top:729.70px;width:137.00px;height:120.00px;">on-demand<br>- T&amp;M</div>
<div class="cell " style="left:2140.00px;top:729.70px;width:267.00px;height:120.00px;"><span class="lk">WestCoast Services LLC</span></div>
<div class="cell " style="left:2579.00px;top:729.70px;width:123.00px;height:120.00px;">09/28/2023</div>
<div class="cell " style="left:2702.00px;top:729.70px;width:124.00px;height:120.00px;">09/30/2023</div>
<div class="cell " style="left:2826.00px;top:729.70px;width:123.00px;height:120.00px;">09/30/2023</div>
<div class="cell " style="left:537.00px;top:854.20px;width:121.00px;height:120.00px;"><span class="lk">Demo<br>Property<br>Client</span></div>
<div class="cell " style="left:658.00px;top:854.20px;width:137.50px;height:120.00px;"><span class="lk">Martins<br>Food 3</span></div>
<div class="cell " style="left:795.50px;top:854.20px;width:399.50px;height:120.00px;"><span class="lk">5 Central Court, Newbury, MA 01922, US</span></div>
<div class="cell " style="left:1195.00px;top:854.20px;width:77.00px;height:120.00px;"><svg width="30" height="40" viewBox="0 0 30 40" style="margin-top:-2.4px;margin-left:1px"><path d="M2.5 0H20.2L30 9.8V37.5Q30 40 27.5 40H2.5Q0 40 0 37.5V2.5Q0 0 2.5 0Z" fill="#aaa6a4"/><path d="M20.2 0L30 9.8H20.2Z" fill="#3a3635"/><rect x="4.9" y="5.4" width="7.9" height="1.7" fill="#fff"/><rect x="4.9" y="10.3" width="7.9" height="1.7" fill="#fff"/><path d="M18.7 21.2Q17.8 19.7 15.1 19.7Q11.6 19.7 11.6 22.7Q11.6 25 15.1 26Q18.7 27 18.7 29.8Q18.7 32.6 15.1 32.6Q12.3 32.6 11.3 30.9" fill="none" stroke="#2b2827" stroke-width="2.1" stroke-linecap="round"/><path d="M15.1 17.6V19.8M15.1 32.5V34.8" fill="none" stroke="#2b2827" stroke-width="2.1" stroke-linecap="round"/></svg></div>
<div class="cell " style="left:1272.00px;top:854.20px;width:87.00px;height:120.00px;"><svg width="30" height="40" viewBox="0 0 30 40" style="margin-top:-2.4px;margin-left:1px"><path d="M2.5 0H20.2L30 9.8V37.5Q30 40 27.5 40H2.5Q0 40 0 37.5V2.5Q0 0 2.5 0Z" fill="#aaa6a4"/><path d="M20.2 0L30 9.8H20.2Z" fill="#3a3635"/><rect x="4.9" y="5.4" width="7.9" height="1.7" fill="#fff"/><rect x="4.9" y="10.3" width="7.9" height="1.7" fill="#fff"/><path d="M18.7 21.2Q17.8 19.7 15.1 19.7Q11.6 19.7 11.6 22.7Q11.6 25 15.1 26Q18.7 27 18.7 29.8Q18.7 32.6 15.1 32.6Q12.3 32.6 11.3 30.9" fill="none" stroke="#2b2827" stroke-width="2.1" stroke-linecap="round"/><path d="M15.1 17.6V19.8M15.1 32.5V34.8" fill="none" stroke="#2b2827" stroke-width="2.1" stroke-linecap="round"/></svg></div>
<div class="cell " style="left:1359.00px;top:854.20px;width:58.00px;height:120.00px;">0</div>
<div class="cell " style="left:1417.00px;top:854.20px;width:90.00px;height:120.00px;">Jay<br>Priority</div>
<div class="cell " style="left:1687.00px;top:854.20px;width:145.00px;height:120.00px;">Snow<br>Removal</div>
<div class="cell " style="left:1910.00px;top:854.20px;width:93.00px;height:120.00px;">NO</div>
<div class="cell " style="left:2003.00px;top:854.20px;width:137.00px;height:120.00px;">on-demand<br>- T&amp;M</div>
<div class="cell " style="left:2140.00px;top:854.20px;width:267.00px;height:120.00px;"><span class="lk">Demo Subcontractor LLC</span></div>
<div class="cell " style="left:2579.00px;top:854.20px;width:123.00px;height:120.00px;">09/28/2023</div>
<div class="cell " style="left:2702.00px;top:854.20px;width:124.00px;height:120.00px;">09/30/2023</div>
<div class="cell " style="left:2826.00px;top:854.20px;width:123.00px;height:120.00px;">09/30/2023</div>
<div class="cell " style="left:537.00px;top:978.70px;width:121.00px;height:120.00px;"><span class="lk">Demo<br>Property<br>Client</span></div>
<div class="cell " style="left:658.00px;top:978.70px;width:137.50px;height:120.00px;"><span class="lk">AD Demo<br>Location<br>display</span></div>
<div class="cell " style="left:795.50px;top:978.70px;width:399.50px;height:120.00px;"><span class="lk">600 Valley Road, Warrington, PA 18976, U<br>S</span></div>
<div class="cell " style="left:1195.00px;top:978.70px;width:77.00px;height:120.00px;"><svg width="30" height="40" viewBox="0 0 30 40" style="margin-top:-2.4px;margin-left:1px"><path d="M2.5 0H20.2L30 9.8V37.5Q30 40 27.5 40H2.5Q0 40 0 37.5V2.5Q0 0 2.5 0Z" fill="#aaa6a4"/><path d="M20.2 0L30 9.8H20.2Z" fill="#3a3635"/><rect x="4.9" y="5.4" width="7.9" height="1.7" fill="#fff"/><rect x="4.9" y="10.3" width="7.9" height="1.7" fill="#fff"/><path d="M18.7 21.2Q17.8 19.7 15.1 19.7Q11.6 19.7 11.6 22.7Q11.6 25 15.1 26Q18.7 27 18.7 29.8Q18.7 32.6 15.1 32.6Q12.3 32.6 11.3 30.9" fill="none" stroke="#2b2827" stroke-width="2.1" stroke-linecap="round"/><path d="M15.1 17.6V19.8M15.1 32.5V34.8" fill="none" stroke="#2b2827" stroke-width="2.1" stroke-linecap="round"/></svg></div>
<div class="cell " style="left:1272.00px;top:978.70px;width:87.00px;height:120.00px;"><svg width="30" height="40" viewBox="0 0 30 40" style="margin-top:-2.4px;margin-left:1px"><path d="M2.5 0H20.2L30 9.8V37.5Q30 40 27.5 40H2.5Q0 40 0 37.5V2.5Q0 0 2.5 0Z" fill="#aaa6a4"/><path d="M20.2 0L30 9.8H20.2Z" fill="#3a3635"/><rect x="4.9" y="5.4" width="7.9" height="1.7" fill="#fff"/><rect x="4.9" y="10.3" width="7.9" height="1.7" fill="#fff"/><path d="M18.7 21.2Q17.8 19.7 15.1 19.7Q11.6 19.7 11.6 22.7Q11.6 25 15.1 26Q18.7 27 18.7 29.8Q18.7 32.6 15.1 32.6Q12.3 32.6 11.3 30.9" fill="none" stroke="#2b2827" stroke-width="2.1" stroke-linecap="round"/><path d="M15.1 17.6V19.8M15.1 32.5V34.8" fill="none" stroke="#2b2827" stroke-width="2.1" stroke-linecap="round"/></svg></div>
<div class="cell " style="left:1359.00px;top:978.70px;width:58.00px;height:120.00px;">0</div>
<div class="cell " style="left:1417.00px;top:978.70px;width:90.00px;height:120.00px;">Jay<br>Priority</div>
<div class="cell " style="left:1687.00px;top:978.70px;width:145.00px;height:120.00px;">Cleaning</div>
<div class="cell " style="left:1910.00px;top:978.70px;width:93.00px;height:120.00px;">NO</div>
<div class="cell " style="left:2003.00px;top:978.70px;width:137.00px;height:120.00px;">on-demand<br>- T&amp;M</div>
<div class="cell " style="left:2140.00px;top:978.70px;width:267.00px;height:120.00px;"><span class="lk">WestCoast Services LLC</span></div>
<div class="cell " style="left:2579.00px;top:978.70px;width:123.00px;height:120.00px;">09/28/2023</div>
<div class="cell " style="left:2702.00px;top:978.70px;width:124.00px;height:120.00px;">09/30/2023</div>
<div class="cell " style="left:2826.00px;top:978.70px;width:123.00px;height:120.00px;">09/30/2023</div>
<div class="cell " style="left:537.00px;top:1103.20px;width:121.00px;height:120.00px;"><span class="lk">Demo<br>Property<br>Client</span></div>
<div class="cell " style="left:658.00px;top:1103.20px;width:137.50px;height:120.00px;"><span class="lk">Grocery<br>Ratan<br>Convenience</span></div>
<div class="cell " style="left:795.50px;top:1103.20px;width:399.50px;height:120.00px;"><span class="lk">171 W 29th St, New York, NY 10001, US</span></div>
<div class="cell " style="left:1195.00px;top:1103.20px;width:77.00px;height:120.00px;"><svg width="30" height="40" viewBox="0 0 30 40" style="margin-top:-2.4px;margin-left:1px"><path d="M2.5 0H20.2L30 9.8V37.5Q30 40 27.5 40H2.5Q0 40 0 37.5V2.5Q0 0 2.5 0Z" fill="#aaa6a4"/><path d="M20.2 0L30 9.8H20.2Z" fill="#3a3635"/><rect x="4.9" y="5.4" width="7.9" height="1.7" fill="#fff"/><rect x="4.9" y="10.3" width="7.9" height="1.7" fill="#fff"/><path d="M18.7 21.2Q17.8 19.7 15.1 19.7Q11.6 19.7 11.6 22.7Q11.6 25 15.1 26Q18.7 27 18.7 29.8Q18.7 32.6 15.1 32.6Q12.3 32.6 11.3 30.9" fill="none" stroke="#2b2827" stroke-width="2.1" stroke-linecap="round"/><path d="M15.1 17.6V19.8M15.1 32.5V34.8" fill="none" stroke="#2b2827" stroke-width="2.1" stroke-linecap="round"/></svg></div>
<div class="cell " style="left:1272.00px;top:1103.20px;width:87.00px;height:120.00px;"><svg width="30" height="40" viewBox="0 0 30 40" style="margin-top:-2.4px;margin-left:1px"><path d="M2.5 0H20.2L30 9.8V37.5Q30 40 27.5 40H2.5Q0 40 0 37.5V2.5Q0 0 2.5 0Z" fill="#aaa6a4"/><path d="M20.2 0L30 9.8H20.2Z" fill="#3a3635"/><rect x="4.9" y="5.4" width="7.9" height="1.7" fill="#fff"/><rect x="4.9" y="10.3" width="7.9" height="1.7" fill="#fff"/><path d="M18.7 21.2Q17.8 19.7 15.1 19.7Q11.6 19.7 11.6 22.7Q11.6 25 15.1 26Q18.7 27 18.7 29.8Q18.7 32.6 15.1 32.6Q12.3 32.6 11.3 30.9" fill="none" stroke="#2b2827" stroke-width="2.1" stroke-linecap="round"/><path d="M15.1 17.6V19.8M15.1 32.5V34.8" fill="none" stroke="#2b2827" stroke-width="2.1" stroke-linecap="round"/></svg></div>
<div class="cell " style="left:1359.00px;top:1103.20px;width:58.00px;height:120.00px;">0</div>
<div class="cell " style="left:1417.00px;top:1103.20px;width:90.00px;height:120.00px;">Crucial</div>
<div class="cell " style="left:1687.00px;top:1103.20px;width:145.00px;height:120.00px;">Cleaning</div>
<div class="cell " style="left:1910.00px;top:1103.20px;width:93.00px;height:120.00px;">NO</div>
<div class="cell " style="left:2003.00px;top:1103.20px;width:137.00px;height:120.00px;">on-demand<br>- T&amp;M</div>
<div class="cell " style="left:2140.00px;top:1103.20px;width:267.00px;height:120.00px;"><span class="lk">Kenny Puma</span></div>
<div class="cell " style="left:2579.00px;top:1103.20px;width:123.00px;height:120.00px;">09/28/2023</div>
<div class="cell " style="left:2702.00px;top:1103.20px;width:124.00px;height:120.00px;">09/30/2023</div>
<div class="cell " style="left:2826.00px;top:1103.20px;width:123.00px;height:120.00px;">09/30/2023</div>
<div class="cell " style="left:537.00px;top:1227.70px;width:121.00px;height:120.00px;"><span class="lk">Demo<br>Property<br>Client</span></div>
<div class="cell " style="left:658.00px;top:1227.70px;width:137.50px;height:120.00px;"><span class="lk">Ramnath<br>City</span></div>
<div class="cell " style="left:795.50px;top:1227.70px;width:399.50px;height:120.00px;"><span class="lk">Ramnath City Road, Nagpur, MH 44111, I<br>N, 25</span></div>
<div class="cell " style="left:1195.00px;top:1227.70px;width:77.00px;height:120.00px;"><svg width="30" height="40" viewBox="0 0 30 40" style="margin-top:-2.4px;margin-left:1px"><path d="M2.5 0H20.2L30 9.8V37.5Q30 40 27.5 40H2.5Q0 40 0 37.5V2.5Q0 0 2.5 0Z" fill="#aaa6a4"/><path d="M20.2 0L30 9.8H20.2Z" fill="#3a3635"/><rect x="4.9" y="5.4" width="7.9" height="1.7" fill="#fff"/><rect x="4.9" y="10.3" width="7.9" height="1.7" fill="#fff"/><path d="M18.7 21.2Q17.8 19.7 15.1 19.7Q11.6 19.7 11.6 22.7Q11.6 25 15.1 26Q18.7 27 18.7 29.8Q18.7 32.6 15.1 32.6Q12.3 32.6 11.3 30.9" fill="none" stroke="#2b2827" stroke-width="2.1" stroke-linecap="round"/><path d="M15.1 17.6V19.8M15.1 32.5V34.8" fill="none" stroke="#2b2827" stroke-width="2.1" stroke-linecap="round"/></svg></div>
<div class="cell " style="left:1272.00px;top:1227.70px;width:87.00px;height:120.00px;"><svg width="30" height="40" viewBox="0 0 30 40" style="margin-top:-2.4px;margin-left:1px"><path d="M2.5 0H20.2L30 9.8V37.5Q30 40 27.5 40H2.5Q0 40 0 37.5V2.5Q0 0 2.5 0Z" fill="#aaa6a4"/><path d="M20.2 0L30 9.8H20.2Z" fill="#3a3635"/><rect x="4.9" y="5.4" width="7.9" height="1.7" fill="#fff"/><rect x="4.9" y="10.3" width="7.9" height="1.7" fill="#fff"/><path d="M18.7 21.2Q17.8 19.7 15.1 19.7Q11.6 19.7 11.6 22.7Q11.6 25 15.1 26Q18.7 27 18.7 29.8Q18.7 32.6 15.1 32.6Q12.3 32.6 11.3 30.9" fill="none" stroke="#2b2827" stroke-width="2.1" stroke-linecap="round"/><path d="M15.1 17.6V19.8M15.1 32.5V34.8" fill="none" stroke="#2b2827" stroke-width="2.1" stroke-linecap="round"/></svg></div>
<div class="cell " style="left:1359.00px;top:1227.70px;width:58.00px;height:120.00px;">0</div>
<div class="cell " style="left:1417.00px;top:1227.70px;width:90.00px;height:120.00px;">Crucial</div>
<div class="cell " style="left:1687.00px;top:1227.70px;width:145.00px;height:120.00px;">Cleaning</div>
<div class="cell " style="left:1910.00px;top:1227.70px;width:93.00px;height:120.00px;">NO</div>
<div class="cell " style="left:2003.00px;top:1227.70px;width:137.00px;height:120.00px;">on-demand<br>- T&amp;M</div>
<div class="cell " style="left:2140.00px;top:1227.70px;width:267.00px;height:120.00px;"><span class="lk">WestCoast Services LLC</span></div>
<div class="cell " style="left:2579.00px;top:1227.70px;width:123.00px;height:120.00px;">09/28/2023</div>
<div class="cell " style="left:2702.00px;top:1227.70px;width:124.00px;height:120.00px;">10/01/2023</div>
<div class="cell " style="left:2826.00px;top:1227.70px;width:123.00px;height:120.00px;">10/01/2023</div>
<div class="cell " style="left:537.00px;top:1352.20px;width:121.00px;height:120.50px;"><span class="lk">KinderCare<br>Education<br>LLC</span></div>
<div class="cell " style="left:658.00px;top:1352.20px;width:137.50px;height:120.50px;"><span class="lk">KinderCare</span></div>
<div class="cell " style="left:795.50px;top:1352.20px;width:399.50px;height:120.50px;"><span class="lk">45 Whippany Road, Whippany, NJ 07981,<br>US</span></div>
<div class="cell " style="left:1195.00px;top:1352.20px;width:77.00px;height:120.50px;"><div style="width:17.5px;height:17.3px;background:#7c7c7c;border-radius:2.5px;margin-left:1.2px;margin-top:0.4px"></div></div>
<div class="cell " style="left:1272.00px;top:1352.20px;width:87.00px;height:120.50px;"><div style="width:17.5px;height:17.3px;background:#7c7c7c;border-radius:2.5px;margin-left:1.2px;margin-top:0.4px"></div></div>
<div class="cell " style="left:1359.00px;top:1352.20px;width:58.00px;height:120.50px;">0</div>
<div class="cell " style="left:1417.00px;top:1352.20px;width:90.00px;height:120.50px;">P2 - 8<br>Hours</div>
<div class="cell " style="left:1687.00px;top:1352.20px;width:145.00px;height:120.50px;">Door<br>Installation</div>
<div class="cell " style="left:1832.00px;top:1352.20px;width:78.00px;height:120.50px;">Break<br>Fix<br>Repair</div>
<div class="cell " style="left:1910.00px;top:1352.20px;width:93.00px;height:120.50px;">NO</div>
<div class="cell " style="left:2003.00px;top:1352.20px;width:137.00px;height:120.50px;">Per Service</div>
<div class="cell " style="left:2407.00px;top:1352.20px;width:172.00px;height:120.50px;"><span class="lk">Isaac Picado<br>Grady Boeman</span></div>
<div class="cell " style="left:2579.00px;top:1352.20px;width:123.00px;height:120.50px;">09/27/2023</div>
<div class="cell " style="left:2702.00px;top:1352.20px;width:124.00px;height:120.50px;">09/28/2023</div>
<div class="cell " style="left:2826.00px;top:1352.20px;width:123.00px;height:120.50px;">09/28/2023</div>
<div class="cell " style="left:537.00px;top:1477.20px;width:121.00px;height:135.00px;"><span class="lk">Client Z</span></div>
<div class="cell " style="left:658.00px;top:1477.20px;width:137.50px;height:135.00px;"><span class="lk">TestSite1</span></div>
<div class="cell " style="left:795.50px;top:1477.20px;width:399.50px;height:135.00px;"><span class="lk">24 Farmview Road, Port Washington, NY<br>11050, US</span></div>
<div class="cell " style="left:1195.00px;top:1477.20px;width:77.00px;height:135.00px;"><svg width="40" height="40" viewBox="0 0 40 40" style="margin-top:-0.6px"><path d="M0 15.5L19.8 0.3L40 15.5V37Q40 40 37 40H3Q0 40 0 37Z" fill="#f4b400"/><rect x="5.2" y="4.7" width="29.1" height="24" rx="1.5" fill="#fde3a9"/><path d="M0 18.3L19.8 31.3L40 18.3" fill="none" stroke="#fff" stroke-width="2.6"/><path d="M0 20L19.8 33L40 20V37Q40 40 37 40H3Q0 40 0 37Z" fill="#f4b400"/><g transform="translate(7.1 -5.8) scale(0.86)"><path d="M18.7 21.2Q17.8 19.7 15.1 19.7Q11.6 19.7 11.6 22.7Q11.6 25 15.1 26Q18.7 27 18.7 29.8Q18.7 32.6 15.1 32.6Q12.3 32.6 11.3 30.9" fill="none" stroke="#e8a600" stroke-width="2.2" stroke-linecap="round"/><path d="M15.1 17.6V19.8M15.1 32.5V34.8" fill="none" stroke="#e8a600" stroke-width="2.2" stroke-linecap="round"/></g></svg></div>
<div class="cell " style="left:1272.00px;top:1477.20px;width:87.00px;height:135.00px;"><svg width="30" height="40" viewBox="0 0 30 40" style="margin-top:-2.4px;margin-left:1px"><path d="M2.5 0H20.2L30 9.8V37.5Q30 40 27.5 40H2.5Q0 40 0 37.5V2.5Q0 0 2.5 0Z" fill="#aaa6a4"/><path d="M20.2 0L30 9.8H20.2Z" fill="#3a3635"/><rect x="4.9" y="5.4" width="7.9" height="1.7" fill="#fff"/><rect x="4.9" y="10.3" width="7.9" height="1.7" fill="#fff"/><path d="M18.7 21.2Q17.8 19.7 15.1 19.7Q11.6 19.7 11.6 22.7Q11.6 25 15.1 26Q18.7 27 18.7 29.8Q18.7 32.6 15.1 32.6Q12.3 32.6 11.3 30.9" fill="none" stroke="#2b2827" stroke-width="2.1" stroke-linecap="round"/><path d="M15.1 17.6V19.8M15.1 32.5V34.8" fill="none" stroke="#2b2827" stroke-width="2.1" stroke-linecap="round"/></svg></div>
<div class="cell " style="left:1359.00px;top:1477.20px;width:58.00px;height:135.00px;">1</div>
<div class="cell " style="left:1417.00px;top:1477.20px;width:90.00px;height:135.00px;">Priority<br>- 1<br>Week</div>
<div class="cell " style="left:1556.00px;top:1477.20px;width:131.00px;height:135.00px;">test</div>
<div class="cell " style="left:1687.00px;top:1477.20px;width:145.00px;height:135.00px;">Waste<br>Management,<br>Welding</div>
<div class="cell " style="left:1832.00px;top:1477.20px;width:78.00px;height:135.00px;">Break<br>Fix<br>Repair</div>
<div class="cell " style="left:1910.00px;top:1477.20px;width:93.00px;height:135.00px;">$100.00</div>
<div class="cell " style="left:2003.00px;top:1477.20px;width:137.00px;height:135.00px;">Equipment,<br>Testing,<br>Maintenance<br>&amp; Inspection</div>
<div class="cell " style="left:2140.00px;top:1477.20px;width:267.00px;height:135.00px;"><span class="lk">Test Mobile Onboarding</span></div>
<div class="cell " style="left:2407.00px;top:1477.20px;width:172.00px;height:135.00px;"><span class="lk">Miles M<br>Grady Boeman<br>Vinay M</span></div>
<div class="cell " style="left:2579.00px;top:1477.20px;width:123.00px;height:135.00px;">09/27/2023</div>
<div class="cell " style="left:2702.00px;top:1477.20px;width:124.00px;height:135.00px;">09/28/2023</div>
<div class="cell " style="left:2826.00px;top:1477.20px;width:123.00px;height:135.00px;">09/28/2023</div>
</div></div>
<div class="b" style="left:2869.00px;top:248.00px;width:11.00px;height:1371.00px;background:#e8e8e8"></div>
<div class="b" style="left:2869.00px;top:248.00px;width:11.00px;height:893.50px;background:#a9a9ab;border-radius:0 0 6px 6px"></div>
<div class="b" style="left:560.00px;top:1619.00px;width:2309.00px;height:11.00px;background:#e3e3e3"></div>
<div class="b" style="left:560.00px;top:1619.00px;width:1998.00px;height:11.00px;background:#a7a9a9;border-radius:0 6px 6px 0"></div>
<div class="b" style="left:2869.00px;top:1619.00px;width:11.00px;height:11.00px;background:#fff"></div>
<div class="b" style="left:0.00px;top:144.00px;width:548.00px;height:1486.00px;background:#fff"></div>
<div class="b" style="left:548.00px;top:144.00px;width:12.00px;height:44.00px;background:#fff"></div>
<div class="b" style="left:548.00px;top:188.00px;width:12.00px;height:1442.00px;background:#e9e9e9"></div>
<div class="b" style="left:548.00px;top:188.00px;width:12.00px;height:1201.00px;background:#a7a7ab;border-radius:6px"></div>
<div class="b" style="left:7.00px;top:189.00px;width:533.00px;height:50.00px;background:#fff;border-radius:4px;box-shadow:0 1px 2px rgba(0,0,0,0.10), 0 0 1px rgba(0,0,0,0.06)"></div>
<div class="b" style="left:7.00px;top:256.10px;width:533.00px;height:50.00px;background:#fff;border-radius:4px;box-shadow:0 1px 2px rgba(0,0,0,0.10), 0 0 1px rgba(0,0,0,0.06)"></div>
<div class="b" style="left:7.00px;top:323.20px;width:533.00px;height:50.00px;background:#fff;border-radius:4px;box-shadow:0 1px 2px rgba(0,0,0,0.10), 0 0 1px rgba(0,0,0,0.06)"></div>
<div class="b" style="left:7.00px;top:390.30px;width:533.00px;height:50.00px;background:#fff;border-radius:4px;box-shadow:0 1px 2px rgba(0,0,0,0.10), 0 0 1px rgba(0,0,0,0.06)"></div>
<div class="b" style="left:7.00px;top:457.40px;width:533.00px;height:50.00px;background:#fff;border-radius:4px;box-shadow:0 1px 2px rgba(0,0,0,0.10), 0 0 1px rgba(0,0,0,0.06)"></div>
<div class="b" style="left:7.00px;top:524.50px;width:533.00px;height:50.00px;background:#fff;border-radius:4px;box-shadow:0 1px 2px rgba(0,0,0,0.10), 0 0 1px rgba(0,0,0,0.06)"></div>
<div class="b" style="left:7.00px;top:591.60px;width:533.00px;height:50.00px;background:#fff;border-radius:4px;box-shadow:0 1px 2px rgba(0,0,0,0.10), 0 0 1px rgba(0,0,0,0.06)"></div>
<div class="t" style="left:33.60px;top:212.01px;font-size:22.2px;color:#2f6ca8;font-weight:700;">Weather Event</div>
<svg class="b" style="left:496.00px;top:210.80px;" width="20.00" height="12.00" viewBox="0 0 20 12"><path d="M2 2L10 10L18 2" fill="none" stroke="#2f6ca8" stroke-width="2.9" stroke-linecap="round" stroke-linejoin="round"/></svg>
<div class="t" style="left:33.60px;top:279.11px;font-size:22.2px;color:#2f6ca8;font-weight:700;">WorkOrder</div>
<svg class="b" style="left:496.00px;top:277.90px;" width="20.00" height="12.00" viewBox="0 0 20 12"><path d="M2 2L10 10L18 2" fill="none" stroke="#2f6ca8" stroke-width="2.9" stroke-linecap="round" stroke-linejoin="round"/></svg>
<div class="t" style="left:33.60px;top:346.21px;font-size:22.2px;color:#2f6ca8;font-weight:700;">Scheduled Service</div>
<svg class="b" style="left:496.00px;top:345.00px;" width="20.00" height="12.00" viewBox="0 0 20 12"><path d="M2 2L10 10L18 2" fill="none" stroke="#2f6ca8" stroke-width="2.9" stroke-linecap="round" stroke-linejoin="round"/></svg>
<div class="t" style="left:33.60px;top:413.31px;font-size:22.2px;color:#2f6ca8;font-weight:700;">Team Member</div>
<svg class="b" style="left:496.00px;top:412.10px;" width="20.00" height="12.00" viewBox="0 0 20 12"><path d="M2 2L10 10L18 2" fill="none" stroke="#2f6ca8" stroke-width="2.9" stroke-linecap="round" stroke-linejoin="round"/></svg>
<div class="t" style="left:33.60px;top:480.41px;font-size:22.2px;color:#2f6ca8;font-weight:700;">Trade</div>
<svg class="b" style="left:496.00px;top:479.20px;" width="20.00" height="12.00" viewBox="0 0 20 12"><path d="M2 2L10 10L18 2" fill="none" stroke="#2f6ca8" stroke-width="2.9" stroke-linecap="round" stroke-linejoin="round"/></svg>
<div class="t" style="left:33.60px;top:547.51px;font-size:22.2px;color:#2f6ca8;font-weight:700;">TradeService</div>
<svg class="b" style="left:496.00px;top:546.30px;" width="20.00" height="12.00" viewBox="0 0 20 12"><path d="M2 2L10 10L18 2" fill="none" stroke="#2f6ca8" stroke-width="2.9" stroke-linecap="round" stroke-linejoin="round"/></svg>
<div class="t" style="left:33.60px;top:614.61px;font-size:22.2px;color:#2f6ca8;font-weight:700;">Service Task</div>
<svg class="b" style="left:496.00px;top:613.40px;" width="20.00" height="12.00" viewBox="0 0 20 12"><path d="M2 2L10 10L18 2" fill="none" stroke="#2f6ca8" stroke-width="2.9" stroke-linecap="round" stroke-linejoin="round"/></svg>
<div class="b" style="left:24.00px;top:143.50px;width:512.00px;height:45.00px;background:#fff;border:1px solid #a8a8a8;border-radius:7px;box-sizing:border-box"></div>
<div class="t" style="left:38.40px;top:155.71px;font-size:22.2px;color:#999;font-weight:400;;-webkit-text-stroke:0.2px currentColor">Filter Templates</div>
<svg class="b" style="left:503.60px;top:159.60px;" width="15.20" height="11.40" viewBox="0 0 15 11"><path d="M0 0H15L7.5 11Z" fill="#999"/></svg>
<div class="b" style="left:7.00px;top:658.00px;width:533.00px;height:784.00px;background:#fff;border-radius:4px;box-shadow:0 1px 2px rgba(0,0,0,0.10), 0 0 1px rgba(0,0,0,0.06)"></div>
<div class="t" style="left:33.60px;top:681.11px;font-size:22.2px;color:#2f6ca8;font-weight:700;">Client</div>
<svg class="b" style="left:496.00px;top:680.00px;" width="20.00" height="12.00" viewBox="0 0 20 12"><path d="M2 10L10 2L18 10" fill="none" stroke="#2f6ca8" stroke-width="2.9" stroke-linecap="round" stroke-linejoin="round"/></svg>
<div class="t" style="left:-518.40px;width:1000px;text-align:right;top:713.96px;font-size:17.3px;color:#333;font-weight:400;;-webkit-text-stroke:0.2px currentColor">Equals Any</div>
<svg class="b" style="left:491.00px;top:717.00px;" width="15.60" height="11.00" viewBox="0 0 15 11"><path d="M0 0H15L7.5 11Z" fill="#999"/></svg>
<div class="t" style="left:-518.40px;width:1000px;text-align:right;top:818.96px;font-size:17.3px;color:#333;font-weight:400;;-webkit-text-stroke:0.2px currentColor">Equals Any</div>
<svg class="b" style="left:491.00px;top:822.00px;" width="15.60" height="11.00" viewBox="0 0 15 11"><path d="M0 0H15L7.5 11Z" fill="#999"/></svg>
<div class="b" style="left:33.40px;top:839.00px;width:482.30px;height:53.30px;background:#fff;border:1px solid #c8c8c8;border-radius:6px;box-sizing:border-box;box-shadow:inset 0 1.5px 2px rgba(0,0,0,0.08)"></div>
<div class="t" style="left:53.90px;top:853.78px;font-size:22px;color:#999;font-weight:400;;-webkit-text-stroke:0.2px currentColor">Status</div>
<div class="t" style="left:-518.40px;width:1000px;text-align:right;top:923.96px;font-size:17.3px;color:#333;font-weight:400;;-webkit-text-stroke:0.2px currentColor">Equals Any</div>
<svg class="b" style="left:491.00px;top:927.00px;" width="15.60" height="11.00" viewBox="0 0 15 11"><path d="M0 0H15L7.5 11Z" fill="#999"/></svg>
<div class="b" style="left:33.40px;top:944.00px;width:482.30px;height:53.30px;background:#fff;border:1px solid #c8c8c8;border-radius:6px;box-sizing:border-box;box-shadow:inset 0 1.5px 2px rgba(0,0,0,0.08)"></div>
<div class="t" style="left:53.90px;top:958.78px;font-size:22px;color:#999;font-weight:400;;-webkit-text-stroke:0.2px currentColor">Country</div>
<div class="t" style="left:-518.40px;width:1000px;text-align:right;top:1028.96px;font-size:17.3px;color:#333;font-weight:400;;-webkit-text-stroke:0.2px currentColor">Equals Any</div>
<svg class="b" style="left:491.00px;top:1032.00px;" width="15.60" height="11.00" viewBox="0 0 15 11"><path d="M0 0H15L7.5 11Z" fill="#999"/></svg>
<div class="b" style="left:33.40px;top:1049.00px;width:482.30px;height:53.30px;background:#fff;border:1px solid #c8c8c8;border-radius:6px;box-sizing:border-box;box-shadow:inset 0 1.5px 2px rgba(0,0,0,0.08)"></div>
<div class="t" style="left:53.90px;top:1063.78px;font-size:22px;color:#999;font-weight:400;;-webkit-text-stroke:0.2px currentColor">State</div>
<div class="t" style="left:-518.40px;width:1000px;text-align:right;top:1133.96px;font-size:17.3px;color:#333;font-weight:400;;-webkit-text-stroke:0.2px currentColor">Equals Any</div>
<svg class="b" style="left:491.00px;top:1137.00px;" width="15.60" height="11.00" viewBox="0 0 15 11"><path d="M0 0H15L7.5 11Z" fill="#999"/></svg>
<div class="b" style="left:33.40px;top:1154.00px;width:482.30px;height:53.30px;background:#fff;border:1px solid #c8c8c8;border-radius:6px;box-sizing:border-box;box-shadow:inset 0 1.5px 2px rgba(0,0,0,0.08)"></div>
<div class="t" style="left:53.90px;top:1168.78px;font-size:22px;color:#999;font-weight:400;;-webkit-text-stroke:0.2px currentColor">City</div>
<div class="t" style="left:-518.40px;width:1000px;text-align:right;top:1238.96px;font-size:17.3px;color:#333;font-weight:400;;-webkit-text-stroke:0.2px currentColor">Equals Any</div>
<svg class="b" style="left:491.00px;top:1242.00px;" width="15.60" height="11.00" viewBox="0 0 15 11"><path d="M0 0H15L7.5 11Z" fill="#999"/></svg>
<div class="b" style="left:33.40px;top:1259.00px;width:482.30px;height:53.30px;background:#fff;border:1px solid #c8c8c8;border-radius:6px;box-sizing:border-box;box-shadow:inset 0 1.5px 2px rgba(0,0,0,0.08)"></div>
<div class="t" style="left:53.90px;top:1273.78px;font-size:22px;color:#999;font-weight:400;;-webkit-text-stroke:0.2px currentColor">Zip</div>
<div class="t" style="left:-518.40px;width:1000px;text-align:right;top:1343.96px;font-size:17.3px;color:#333;font-weight:400;;-webkit-text-stroke:0.2px currentColor">Equals Any</div>
<svg class="b" style="left:491.00px;top:1347.00px;" width="15.60" height="11.00" viewBox="0 0 15 11"><path d="M0 0H15L7.5 11Z" fill="#999"/></svg>
<div class="b" style="left:33.40px;top:1364.00px;width:482.30px;height:53.30px;background:#fff;border:1px solid #c8c8c8;border-radius:6px;box-sizing:border-box;box-shadow:inset 0 1.5px 2px rgba(0,0,0,0.08)"></div>
<div class="t" style="left:53.90px;top:1378.78px;font-size:22px;color:#999;font-weight:400;;-webkit-text-stroke:0.2px currentColor">Address</div>
<div class="b" style="left:33.40px;top:734.00px;width:482.00px;height:104.00px;background:#fff;border:1px solid #9fb8d6;border-radius:6px;box-sizing:border-box;box-shadow:0 6px 12px rgba(0,0,0,0.18)"></div>
<div class="b" style="left:50.00px;top:785.50px;width:460.00px;height:1.00px;background:#f3f3f3"></div>
<div class="t" style="left:53.90px;top:749.38px;font-size:22px;color:#999;font-weight:400;;-webkit-text-stroke:0.2px currentColor">Name</div>
<div class="b" style="left:53.00px;top:751.00px;width:1.60px;height:20.00px;background:#333"></div>
<div class="t" style="left:53.60px;top:800.68px;font-size:22px;color:#666;font-weight:400;;-webkit-text-stroke:0.2px currentColor">Searching…</div>
<div class="b" style="left:7.00px;top:1459.00px;width:533.00px;height:50.00px;background:#fff;border-radius:4px;box-shadow:0 1px 2px rgba(0,0,0,0.10), 0 0 1px rgba(0,0,0,0.06)"></div>
<div class="t" style="left:33.60px;top:1481.31px;font-size:22.2px;color:#2f6ca8;font-weight:700;">Site</div>
<svg class="b" style="left:496.00px;top:1480.00px;" width="20.00" height="12.00" viewBox="0 0 20 12"><path d="M2 2L10 10L18 2" fill="none" stroke="#2f6ca8" stroke-width="2.9" stroke-linecap="round" stroke-linejoin="round"/></svg>
<div class="b" style="left:7.00px;top:1526.00px;width:533.00px;height:50.00px;background:#fff;border-radius:4px;box-shadow:0 1px 2px rgba(0,0,0,0.10), 0 0 1px rgba(0,0,0,0.06)"></div>
<div class="t" style="left:33.60px;top:1548.21px;font-size:22.2px;color:#2f6ca8;font-weight:700;">Purchase Order</div>
<svg class="b" style="left:496.00px;top:1547.00px;" width="20.00" height="12.00" viewBox="0 0 20 12"><path d="M2 2L10 10L18 2" fill="none" stroke="#2f6ca8" stroke-width="2.9" stroke-linecap="round" stroke-linejoin="round"/></svg>
<div class="b" style="left:8.00px;top:1577.00px;width:179.00px;height:53.00px;background:linear-gradient(#5cb85c,#419641);border-top:1px solid #3e8f3e;box-sizing:border-box"></div>
<div class="b" style="left:187.00px;top:1577.00px;width:186.00px;height:53.00px;background:linear-gradient(#337ab7,#265a88);border-top:1px solid #245580;box-sizing:border-box;border-left:1px solid #245580"></div>
<div class="b" style="left:373.00px;top:1577.00px;width:187.00px;height:53.00px;background:linear-gradient(#d9534f,#c12e2a);border-top:1px solid #b92c28;box-sizing:border-box;border-left:1px solid #b92c28"></div>
<div class="t" style="left:-398.60px;width:1000px;text-align:center;top:1591.41px;font-size:22.2px;color:#fff;font-weight:400;;-webkit-text-stroke:0.2px currentColor">Run Filters</div>
<div class="t" style="left:-220.00px;width:1000px;text-align:center;top:1591.41px;font-size:22.2px;color:#fff;font-weight:400;;-webkit-text-stroke:0.2px currentColor">Save Template</div>
<div class="t" style="left:-33.50px;width:1000px;text-align:center;top:1591.41px;font-size:22.2px;color:#fff;font-weight:400;;-webkit-text-stroke:0.2px currentColor">Clear</div>
<div class="b" style="left:38.30px;top:1500.30px;width:91.70px;height:91.70px;background:#3a2fae;border-radius:50%"></div>
<div class="b" style="left:68.00px;top:1530.00px;width:32.00px;height:32.00px;background:#c8607f;border-radius:50%"></div>
</body></html>
